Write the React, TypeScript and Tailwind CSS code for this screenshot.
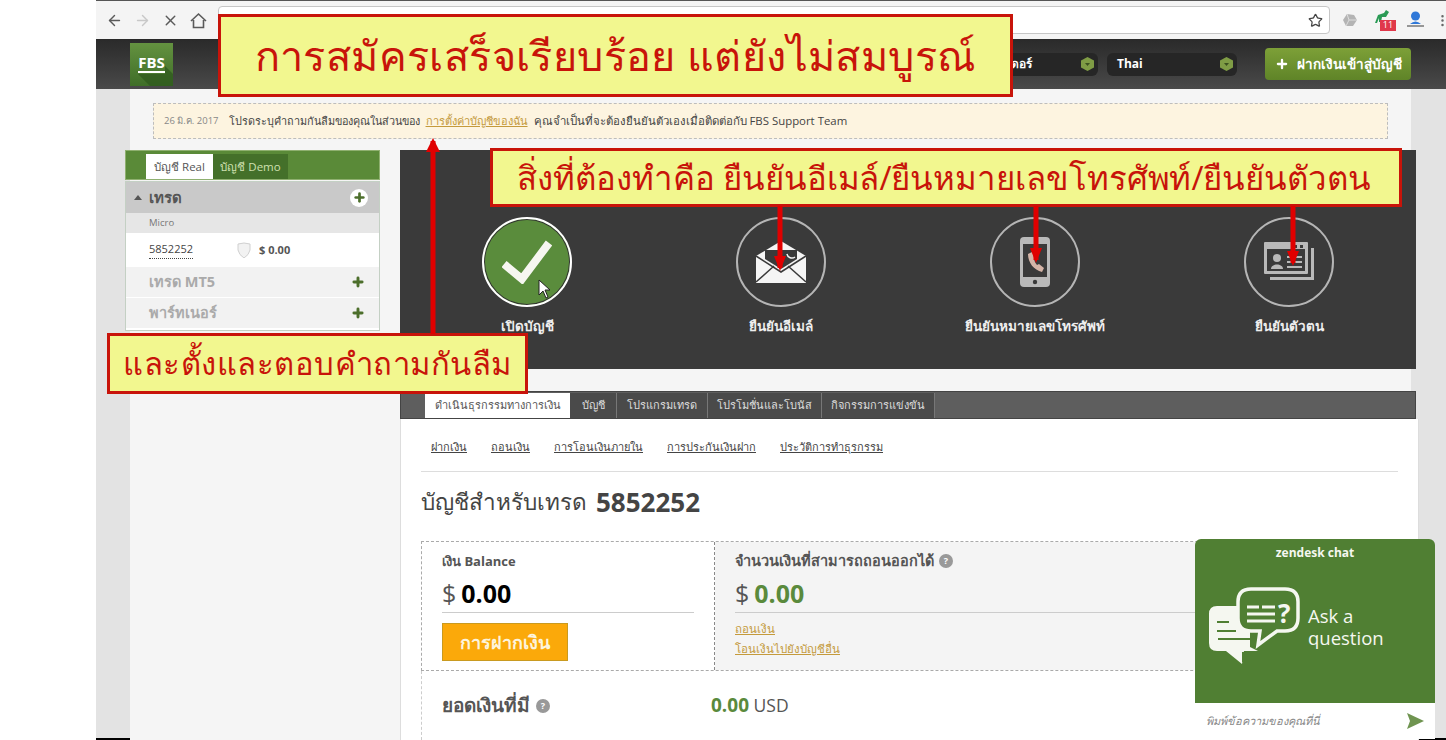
import { ArrowLeft, ArrowRight, X, Star, Plus, MoreVertical } from 'lucide-react';

const font = "font-['Open_Sans','Noto_Sans',sans-serif]";

const steps = [
  { label: 'เปิดบัญชี', active: true },
  { label: 'ยืนยันอีเมล์', active: false },
  { label: 'ยืนยันหมายเลขโทรศัพท์', active: false },
  { label: 'ยืนยันตัวตน', active: false },
];

function StepIcon({ index }: { index: number }) {
  if (index === 0) {
    return (
      <svg width="50" height="44" viewBox="0 0 50 44">
        <path d="M2 24 L20 39 L47 3" fill="none" stroke="#f6f6f0" strokeWidth="8" />
      </svg>
    );
  }
  if (index === 1) {
    return (
      <svg width="50" height="42" viewBox="0 0 50 42">
        <path d="M0 15 L25 0 L50 15 L50 42 L0 42 Z" fill="#f5f5f5" />
        <path d="M9 18 V9 H41 V18 L25 28 Z" fill="#3a3a3a" />
        <path d="M0 41 L18 25 M50 41 L32 25 M0 15 L25 31 L50 15" stroke="#3a3a3a" strokeWidth="1.5" fill="none" />
        <path d="M31 13 a5 5 0 0 0 8 3" stroke="#f5f5f5" strokeWidth="1.5" fill="none" />
      </svg>
    );
  }
  if (index === 2) {
    return (
      <svg width="30" height="50" viewBox="0 0 30 50">
        <rect width="30" height="50" rx="4" fill="#b9b9b9" />
        <rect x="3" y="7" width="24" height="33" fill="#3a3a3a" />
        <circle cx="15" cy="45" r="2.2" fill="#3a3a3a" />
        <path d="M8 17 C8 26 14 33 22 35 L24 31 L19 27 L17 28 C15 26 14 23 14 21 L15 19 L12 15 Z" fill="#d5b5a8" />
      </svg>
    );
  }
  return (
    <svg width="50" height="40" viewBox="0 0 50 40">
      <path d="M47 6 H50 V38 H6 V35 H47 Z" fill="#b9b9b9" />
      <rect width="44" height="32" rx="1" fill="#b9b9b9" />
      <rect x="3" y="7" width="38" height="22" fill="#3a3a3a" />
      <circle cx="13" cy="16" r="4" fill="#b9b9b9" />
      <path d="M7 27 C7 21 19 21 19 27 Z" fill="#b9b9b9" />
      <path d="M23 15 H38 M23 20 H38 M23 25 H38" stroke="#b9b9b9" strokeWidth="2" />
      <rect x="30" y="3" width="3" height="3" fill="#3a3a3a" />
      <rect x="36" y="3" width="3" height="3" fill="#3a3a3a" />
    </svg>
  );
}

function GemButton() {
  return (
    <svg width="13" height="14" viewBox="0 0 13 14">
      <path d="M6.5 0 L13 3.5 V10.5 L6.5 14 L0 10.5 V3.5 Z" fill="#7f9c45" />
      <path d="M4 6 L6.5 9 L9 6 Z" fill="#3d5220" />
    </svg>
  );
}

function HelpDot({ size }: { size: string }) {
  return <span className={`flex items-center justify-center rounded-full bg-[#999] text-[9px] font-bold text-white ${size}`}>?</span>;
}

function Annotation({ className, text }: { className: string; text: string }) {
  return (
    <div className={`absolute flex items-center justify-center whitespace-nowrap border-[3px] border-[#c8140a] bg-[#f2f78f] text-[#c8140a] ${className}`}>
      {text}
    </div>
  );
}

function Arrow({ x, top, bottom, up }: { x: number; top: number; bottom: number; up?: boolean }) {
  const h = bottom - top;
  return (
    <svg className="absolute" style={{ left: x - 8, top }} width="16" height={h} viewBox={`0 0 16 ${h}`}>
      <path d={`M8 0 V${h - 3}`} stroke="#e00000" strokeWidth="5" transform={up ? 'translate(0 3)' : undefined} />
      {up ? <path d="M8 0 L1 14 H15 Z" fill="#e00000" /> : <path d={`M8 ${h} L2 ${h - 15} H14 Z`} fill="#e00000" />}
    </svg>
  );
}

export default function App() {
  return (
    <div className={`relative flex h-[740px] w-[1446px] overflow-hidden bg-white ${font}`}>
      <div className="w-[96px] shrink-0 bg-white" />
      <div className="flex min-w-0 flex-1 flex-col">
        {/* browser bar */}
        <div className="flex h-[39px] shrink-0 items-center gap-[11px] border-t border-[#555] bg-[#f4f4f4] pl-[10px]">
          <ArrowLeft size={17} className="shrink-0 text-[#5a5a5a]" />
          <ArrowRight size={17} className="shrink-0 text-[#c8c8c8]" />
          <X size={17} className="shrink-0 text-[#5a5a5a]" />
          <svg className="shrink-0" width="17" height="17" viewBox="0 0 17 17">
            <path d="M1 9 L8.5 2 L16 9 M3.5 8 V15.5 H13.5 V8" fill="none" stroke="#5a5a5a" strokeWidth="1.6" />
          </svg>
          <div className="flex h-[28px] w-[1112px] shrink-0 items-center justify-end rounded-sm border border-[#c6c6c6] bg-white pr-[6px]">
            <Star size={15} className="text-[#444]" />
          </div>
          <svg className="shrink-0" width="16" height="14" viewBox="0 0 16 14">
            <path d="M2 7 L6 1 L13 2 L16 7 L12 13 L5 13 Z" fill="#b4b4b4" />
            <path d="M6 1 L8 7 L5 13 M8 7 L16 7" stroke="#ddd" fill="none" />
          </svg>
          <div className="relative ml-[6px] h-[21px] w-[22px] shrink-0">
            <svg width="16" height="14" viewBox="0 0 16 14">
              <path d="M1 13 L4 5 L10 3 L12 0 L15 2 L12 7 L8 7 L7 12 L5 12 L5 8 L3 13 Z" fill="#2a9a55" />
            </svg>
            <div className="absolute bottom-0 right-0 flex h-[11px] w-[16px] items-center justify-center bg-[#e0384a] text-[9px] text-white">11</div>
          </div>
          <svg className="shrink-0" width="17" height="18" viewBox="0 0 17 18">
            <circle cx="8.5" cy="5" r="4.5" fill="#2f78d8" />
            <path d="M3 13 Q8.5 8 14 13 Z" fill="#2f78d8" />
            <path d="M0 15 H17" stroke="#777" strokeWidth="1.5" />
          </svg>
          <MoreVertical size={15} className="shrink-0 text-[#666]" />
        </div>

        {/* site header */}
        <div className="flex h-[50px] shrink-0 items-center bg-gradient-to-b from-[#2a2a2a] to-[#4a4a4a] pl-[34px] pr-[35px]">
          <div className="relative flex h-[43px] w-[43px] flex-col items-center justify-center overflow-hidden bg-gradient-to-b from-[#649240] to-[#3f6e28] text-[15px] font-bold leading-[15px] text-white">
            <svg className="absolute left-0 top-0" width="43" height="43" viewBox="0 0 43 43">
              <path d="M8 31 H35 V23 L43 31 V43 H20 Z" fill="#2f5a1e" opacity="0.75" />
            </svg>
            <span className="relative">FBS</span>
            <span className="relative mt-[1px] h-[2px] w-[27px] bg-white" />
          </div>
          <div className="ml-auto flex h-[23px] w-[140px] items-center justify-between rounded-md bg-[#262626] pl-[23px] pr-[4px] text-[12px] font-bold text-white">
            <span>เทรดเดอร์</span>
            <GemButton />
          </div>
          <div className="ml-[9px] flex h-[23px] w-[130px] items-center justify-between rounded-md bg-[#262626] pl-[10px] pr-[4px] text-[12px] font-bold text-white">
            <span>Thai</span>
            <GemButton />
          </div>
          <div className="ml-[28px] flex h-[32px] w-[146px] items-center justify-center gap-[8px] rounded bg-gradient-to-b from-[#7da038] to-[#5f8428] text-[13.5px] font-bold text-white">
            <Plus size={14} strokeWidth={4} />
            <span>ฝากเงินเข้าสู่บัญชี</span>
          </div>
        </div>

        {/* page body */}
        <div className="flex min-h-0 flex-1 flex-col border-b-[2px] border-black bg-[#e3e3e3]">
          <div className="ml-[34px] flex w-[1281px] flex-1 flex-col bg-[#f5f5f5] pt-[14px]">
            <div className="ml-[23px] flex h-[36px] w-[1235px] items-center border border-dashed border-[#bdbdbd] bg-[#fdf4e0] pl-[10px] text-[11px] text-[#444]">
              <span className="mr-[10px] text-[9.5px] text-[#888]">26 มิ.ค. 2017</span>
              <span className="text-[10.8px]">โปรดระบุคำถามกันลืมของคุณในส่วนของ</span>
              <span className="ml-[6px] text-[#c49a3c] underline">การตั้งค่าบัญชีของฉัน</span>
              <span className="ml-[6px] text-[11.4px]">คุณจำเป็นที่จะต้องยืนยันตัวเองเมื่อติดต่อกับ FBS Support Team</span>
            </div>

            <div className="-ml-[5px] mt-[11px] flex min-h-0 flex-1 gap-[20px]">
              {/* left panel */}
              <div className="w-[255px] shrink-0">
                <div className="flex h-[30px] items-end border border-[#8fb070] bg-[#5a8a38] pl-[20px]">
                  <div className="flex h-[25px] w-[67px] items-center justify-center bg-white text-[11.5px] text-[#555]">บัญชี Real</div>
                  <div className="flex h-[25px] w-[75px] items-center justify-center bg-[#44702a] text-[11.5px] text-[#cfe0b0]">บัญชี Demo</div>
                </div>
                <div className="mt-[1px] border border-[#c4d0c4] bg-white pb-[2px]">
                  <div className="flex h-[31px] items-center justify-between bg-[#c9c9c9] pl-[8px] pr-[11px]">
                    <span className="flex items-center gap-[7px] text-[15px] font-bold text-[#555]">
                      <span className="h-0 w-0 border-x-[4px] border-b-[5px] border-x-transparent border-b-[#555]" />เทรด
                    </span>
                    <span className="flex h-[18px] w-[18px] items-center justify-center rounded-full bg-white">
                      <Plus size={13} strokeWidth={5} className="text-[#4d6f2c]" />
                    </span>
                  </div>
                  <div className="flex h-[20px] items-center bg-[#e6e6e6] pl-[23px] text-[9.5px] text-[#777]">Micro</div>
                  <div className="flex h-[34px] items-center bg-white pl-[23px] text-[11px] text-[#444]">
                    <span className="border-b border-dotted border-[#444]">5852252</span>
                    <svg className="ml-[44px]" width="14" height="16" viewBox="0 0 14 16">
                      <path d="M1 2 Q7 0 13 2 V8 Q12 13 7 16 Q2 13 1 8 Z" fill="#f2f2f2" stroke="#d0d0d0" />
                    </svg>
                    <span className="ml-[8px] font-bold text-[#555]">$ 0.00</span>
                  </div>
                  <div className="flex h-[31px] items-center justify-between border-b border-white bg-[#f2f2f2] pl-[23px] pr-[14px] text-[14.5px] font-bold text-[#aaa]">
                    <span>เทรด MT5</span>
                    <Plus size={14} strokeWidth={5} className="text-[#4d6f2c]" />
                  </div>
                  <div className="flex h-[30px] items-center justify-between bg-[#f2f2f2] pl-[23px] pr-[14px] text-[14.5px] font-bold text-[#aaa]">
                    <span>พาร์ทเนอร์</span>
                    <Plus size={14} strokeWidth={5} className="text-[#4d6f2c]" />
                  </div>
                </div>
              </div>

              {/* right column */}
              <div className="flex w-[1019px] shrink-0 flex-col">
                <div className="flex h-[219px] w-[1016px] justify-around bg-[#3a3a3a] pt-[67px]">
                  {steps.map((s, i) => (
                    <div key={s.label} className="flex w-[254px] flex-col items-center">
                      <div
                        className={
                          s.active
                            ? 'flex h-[90px] w-[90px] items-center justify-center rounded-full border-[2px] border-white bg-[#5a8c3c] shadow-[inset_0_0_0_1px_#333]'
                            : 'flex h-[90px] w-[90px] items-center justify-center rounded-full border-[2px] border-[#b5b5b5]'
                        }
                      >
                        <StepIcon index={i} />
                      </div>
                      <span className="mt-[9px] text-[13.5px] font-bold text-[#eee]">{s.label}</span>
                    </div>
                  ))}
                </div>

                <div className="mt-[22px] flex h-[28px] w-[1016px] shrink-0 items-end border border-[#444] bg-[#5e5e5e] pl-[24px]">
                  <div className="flex h-[25px] w-[145px] items-center justify-center bg-white text-[11px] text-[#555]">ดำเนินธุรกรรมทางการเงิน</div>
                  {[
                    { t: 'บัญชี', w: 'w-[47px]' },
                    { t: 'โปรแกรมเทรด', w: 'w-[91px]' },
                    { t: 'โปรโมชั่นและโบนัส', w: 'w-[114px]' },
                    { t: 'กิจกรรมการแข่งขัน', w: 'w-[113px]' },
                  ].map(({ t, w }) => (
                    <div key={t} className={`flex h-[25px] items-center justify-center border-r border-[#777] bg-[#4a4a4a] text-[11px] text-[#ddd] ${w}`}>{t}</div>
                  ))}
                </div>

                <div className="flex min-h-0 flex-1 flex-col border-x border-[#ddd] bg-white px-[20px]">
                  <div className="flex h-[53px] shrink-0 items-center gap-[24px] border-b border-[#ddd] pl-[10px] pt-[5px] text-[11px] text-[#444] underline">
                    <span>ฝากเงิน</span>
                    <span>ถอนเงิน</span>
                    <span>การโอนเงินภายใน</span>
                    <span>การประกันเงินฝาก</span>
                    <span>ประวัติการทำธุรกรรม</span>
                  </div>
                  <div className="mt-[9px] flex h-[42px] shrink-0 items-center gap-[9px] text-[22.5px] text-[#444]">
                    <span>บัญชีสำหรับเทรด</span>
                    <span className="text-[26px] font-bold">5852252</span>
                  </div>
                  <div className="mt-[18px] flex h-[130px] shrink-0 border border-dashed border-[#aaa]">
                    <div className="w-[293px] shrink-0 border-r border-dashed border-[#888] px-[20px] pt-[9px]">
                      <div className="h-[20px] text-[13px] font-bold leading-[20px] text-[#555]">เงิน Balance</div>
                      <div className="mt-[4px] flex h-[38px] items-center gap-[5px] border-b border-[#ccc] text-[25px] text-[#555]">
                        <span>$</span>
                        <span className="font-bold text-black">0.00</span>
                      </div>
                      <div className="mt-[10px] flex h-[38px] w-[126px] items-center justify-center border border-[#c99a20] bg-[#fba90a] text-[18px] font-bold text-[#fdf4dc]">การฝากเงิน</div>
                    </div>
                    <div className="flex-1 bg-[#f4f4f4] pl-[20px] pt-[9px]">
                      <div className="flex h-[20px] items-center gap-[5px] text-[14.5px] font-bold text-[#555]">
                        จำนวนเงินที่สามารถถอนออกได้
                        <HelpDot size="h-[14px] w-[14px]" />
                      </div>
                      <div className="mt-[4px] flex h-[38px] items-center gap-[5px] border-b border-[#ccc] text-[25px] text-[#555]">
                        <span>$</span>
                        <span className="font-bold text-[#5a8a3c]">0.00</span>
                      </div>
                      <div className="mt-[8px] h-[16px] w-fit text-[11.5px] leading-[16px] text-[#c49a3c] underline">ถอนเงิน</div>
                      <div className="mt-[4px] h-[16px] w-fit text-[11.5px] leading-[16px] text-[#c49a3c] underline">โอนเงินไปยังบัญชีอื่น</div>
                    </div>
                  </div>
                  <div className="flex h-[69px] shrink-0 items-center border-l border-dashed border-[#ccc] pl-[20px]">
                    <span className="flex w-[269px] items-center gap-[6px] text-[19px] font-bold text-[#555]">
                      ยอดเงินที่มี
                      <HelpDot size="h-[14px] w-[14px]" />
                    </span>
                    <span className="text-[17.5px] text-[#555]"><b className="text-[19px] text-[#5a8a3c]">0.00</b> USD</span>
                  </div>
                </div>
              </div>
            </div>
          </div>
        </div>
      </div>

      {/* annotations over the screenshot */}
      <Annotation className="left-[218px] top-[14px] h-[83px] w-[795px] text-[41.5px] tracking-[0.4px]" text="การสมัครเสร็จเรียบร้อย แต่ยังไม่สมบูรณ์" />
      <Annotation className="left-[490px] top-[148px] h-[59px] w-[912px] pr-[4px] text-[33px] tracking-[-0.07px]" text="สิ่งที่ต้องทำคือ ยืนยันอีเมล์/ยืนหมายเลขโทรศัพท์/ยืนยันตัวตน" />
      <Annotation className="left-[107px] top-[333px] h-[61px] w-[421px] text-[31px] tracking-[0.5px]" text="และตั้งและตอบคำถามกันลืม" />
      <Arrow x={433} top={138} bottom={334} up />
      <Arrow x={780} top={206} bottom={271} />
      <Arrow x={1036} top={206} bottom={263} />
      <Arrow x={1293} top={206} bottom={266} />

      {/* cursor */}
      <svg className="absolute left-[538px] top-[279px]" width="13" height="20" viewBox="0 0 13 20">
        <path d="M1 1 V16 L5 12 L8 19 L10 18 L7 11 L12 11 Z" fill="#fff" stroke="#222" />
      </svg>

      {/* zendesk chat */}
      <div className="absolute left-[1195px] top-[539px] flex h-[200px] w-[240px] flex-col overflow-hidden rounded-t-md">
        <div className="flex h-[164px] flex-col bg-[#507f33] text-[#f5f7f0]">
          <div className="mt-[5px] text-center text-[12px] font-bold">zendesk chat</div>
          <div className="mt-[25px] flex items-center pl-[13px]">
            <svg width="92" height="80" viewBox="0 0 92 80">
              <path d="M9 19 H42 V60 L50 64 H36 L34 77 L18 64 H9 Q1 64 1 56 V27 Q1 19 9 19 Z" fill="#f5f7f0" />
              <path d="M9 35 H21 M9 44 H28 M10 52 H48 M35 65 V75" stroke="#507f33" strokeWidth="2" />
              <path d="M43 2 H77 Q90 2 90 15 V31 Q90 44 77 44 H69 L50 58 L52 44 H43 Q30 44 30 31 V15 Q30 2 43 2 Z" fill="#507f33" stroke="#f5f7f0" strokeWidth="3.5" />
              <path d="M39 20 H51 M54 20 H67 M39 27 H67 M39 34 H67" stroke="#f5f7f0" strokeWidth="3" />
              <text x="70" y="36" fontSize="26" fontWeight="bold" fill="#f5f7f0">?</text>
            </svg>
            <div className="ml-[8px] flex flex-col text-[18.5px]">
              <span className="h-[22px] leading-[22px]">Ask a</span>
              <span className="h-[22px] leading-[22px]">question</span>
            </div>
          </div>
        </div>
        <div className="flex flex-1 items-center justify-between bg-white px-[11px] text-[11px] italic text-[#888]">
          <span>พิมพ์ข้อความของคุณที่นี่</span>
          <svg width="17" height="16" viewBox="0 0 17 16">
            <path d="M0 0 L17 8 L0 16 L3 8 Z" fill="#6f9450" />
          </svg>
        </div>
      </div>
    </div>
  );
}
